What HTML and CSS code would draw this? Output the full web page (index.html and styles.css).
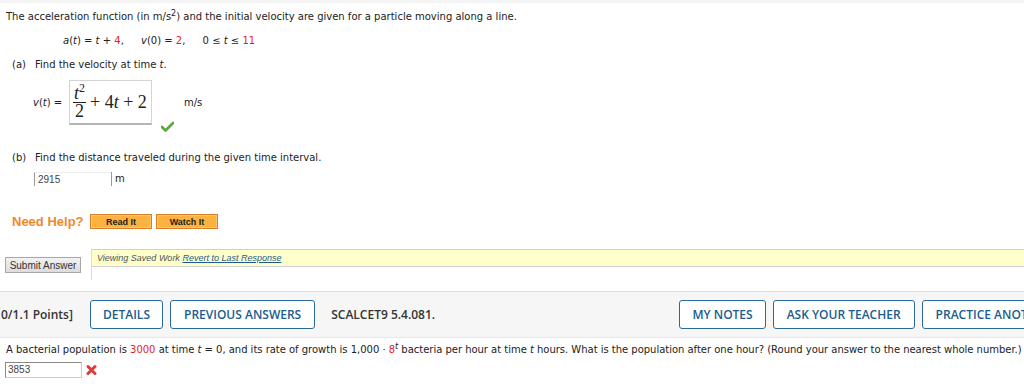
FILE: index.html
```html
<!DOCTYPE html>
<html>
<head>
    <title>Question</title>
    <meta charset="UTF-8">
    <link rel="stylesheet" href="styles.css">
</head>
<body>
    <div class="top-strip"></div>

    <div class="question">
        <p class="intro">The acceleration function (in m/s<sup>2</sup>) and the initial velocity are given for a particle moving along a line.</p>
        <p class="eq">
            <span class="term"><i>a</i>(<i>t</i>) = <i>t</i> + <span class="red">4</span>,</span>
            <span class="term"><i>v</i>(0) = <span class="red">2</span>,</span>
            <span class="term">0 &le; <i>t</i> &le; <span class="red">11</span></span>
        </p>

        <p class="part"><span class="label">(a)</span>Find the velocity at time <i>t</i>.</p>
        <div class="answer-row">
            <span class="lhs"><i>v</i>(<i>t</i>) =</span>
            <div class="mathbox">
                <span class="frac">
                    <span class="num"><i>t</i><sup>2</sup></span>
                    <span class="den">2</span>
                </span>
                <span class="rest">+ 4<i>t</i> + 2</span>
            </div>
            <svg class="check" width="13" height="11" viewBox="0 0 13 11">
                <path d="M1 6 L4.5 9.5 L12 2" fill="none" stroke="#5ea843" stroke-width="2.8" stroke-linecap="round" stroke-linejoin="round"/>
            </svg>
            <span class="unit">m/s</span>
        </div>

        <p class="part part-b"><span class="label">(b)</span>Find the distance traveled during the given time interval.</p>
        <div class="input-row">
            <span class="answer-field">2915</span>
            <span class="unit-m">m</span>
        </div>

        <div class="help-row">
            <span class="need-help">Need Help?</span>
            <button class="help-btn">Read It</button>
            <button class="help-btn">Watch It</button>
        </div>

        <div class="submit-row">
            <button class="submit-btn">Submit Answer</button>
            <div class="saved-box">
                <div class="saved-bar"><i>Viewing Saved Work</i> <a href="#">Revert to Last Response</a></div>
            </div>
        </div>
    </div>

    <div class="toolbar">
        <span class="points">0/1.1 Points]</span>
        <button class="tool-btn">DETAILS</button>
        <button class="tool-btn">PREVIOUS ANSWERS</button>
        <span class="ref">SCALCET9 5.4.081.</span>
        <div class="tool-right">
            <button class="tool-btn">MY NOTES</button>
            <button class="tool-btn">ASK YOUR TEACHER</button>
            <button class="tool-btn">PRACTICE ANOTHER</button>
        </div>
    </div>

    <div class="question next">
        <p class="bacteria">A bacterial population is <span class="red">3000</span> at time <i>t</i> = 0, and its rate of growth is 1,000 &middot; <span class="red">8</span><sup><i>t</i></sup> bacteria per hour at time <i>t</i> hours. What is the population after one hour? (Round your answer to the nearest whole number.)</p>
        <div class="input-row2">
            <span class="wrong-field">3853</span>
            <svg class="cross" width="11" height="12" viewBox="0 0 11 12">
                <path d="M2 2.5 L9 9.5 M9 2.5 L2 9.5" fill="none" stroke="#e03b3b" stroke-width="3" stroke-linecap="round"/>
            </svg>
        </div>
    </div>
</body>
</html>
```

FILE: styles.css
```css
/* page basics */
body {
    margin: 0;
    font-family: "DejaVu Sans", Verdana, sans-serif;
    font-size: 10px;
    color: #222;
    background: #ffffff;
    width: 1024px;
    overflow: hidden;
}
p {
    margin: 0;
    line-height: 14px;
}
.red {
    color: #e4231f;
}
sup {
    font-size: 8px;
    line-height: 0;
}
.top-strip {
    height: 3px;
    background-color: #f4f4f4;
}

/* question text */
.intro {
    margin-top: 7px;
    padding-left: 6px;
}
.eq {
    margin-top: 10px;
    padding-left: 63px;
}
.eq .term {
    margin-right: 14px;
}
.part {
    margin-top: 10px;
    padding-left: 12px;
}
.part .label {
    display: inline-block;
    width: 23px;
}
.part-b {
    margin-top: 26px;
}

/* velocity answer */
.answer-row {
    display: flex;
    align-items: center;
    height: 45px;
    margin-top: 8px;
    padding-left: 33px;
}
.lhs {
    width: 36px;
}
.mathbox {
    display: flex;
    align-items: center;
    box-sizing: border-box;
    width: 83px;
    height: 45px;
    padding-left: 3px;
    border: 1px solid #d4d4d4;
    border-bottom: 2px solid #b4b4b4;
    font-family: "Liberation Serif", "Times New Roman", serif;
    font-size: 18px;
    color: #222;
}
.frac {
    display: inline-flex;
    flex-direction: column;
    align-items: center;
    margin-right: 4px;
}
.frac .num {
    line-height: 17px;
    padding: 0 1px;
    border-bottom: 1px solid #222;
}
.frac .num sup {
    font-size: 12px;
}
.frac .den {
    line-height: 17px;
}
.check {
    align-self: flex-end;
    margin: 0 10px -7px 9px;
}

/* distance answer */
.input-row {
    display: flex;
    align-items: center;
    height: 14px;
    margin-top: 7px;
    padding-left: 34px;
}
.answer-field {
    box-sizing: border-box;
    width: 77px;
    height: 14px;
    padding-left: 3px;
    border-left: 1px solid #999;
    border-top: 1px solid #eee;
    font-family: "Liberation Sans", Arial, sans-serif;
    font-size: 10px;
    line-height: 13px;
    color: #444;
}
.unit-m {
    height: 14px;
    padding-left: 3px;
    border-left: 1px solid #999;
    line-height: 14px;
}

/* help buttons */
.help-row {
    display: flex;
    align-items: center;
    height: 15px;
    margin-top: 28px;
    padding-left: 12px;
}
.need-help {
    width: 78px;
    font-family: "Liberation Sans", Arial, sans-serif;
    font-weight: bold;
    font-size: 13px;
    color: #f0882a;
}
.help-btn {
    box-sizing: border-box;
    width: 62px;
    height: 15px;
    margin-right: 4px;
    padding: 0;
    background-color: #fcb241;
    border: 1px solid #d97f25;
    box-shadow: inset 0 0 0 1px #fdc56a;
    font-family: "Liberation Sans", Arial, sans-serif;
    font-weight: bold;
    font-size: 9px;
    color: #222;
}

/* submit + saved notice */
.submit-row {
    display: flex;
    align-items: flex-start;
    margin-top: 20px;
    padding-left: 5px;
}
.submit-btn {
    box-sizing: border-box;
    width: 76px;
    height: 16px;
    margin-top: 8px;
    margin-right: 10px;
    padding: 0;
    background: linear-gradient(#f2f2f2, #dcdcdc);
    border: 1px solid #a8a8a8;
    font-family: "Liberation Sans", Arial, sans-serif;
    font-size: 10px;
    color: #333;
}
.saved-box {
    flex: 1;
    height: 31px;
    border-left: 1px solid #dcdcdc;
}
.saved-bar {
    height: 16px;
    padding-left: 5px;
    background-color: #ffffcc;
    border-top: 1px solid #cfcfcf;
    border-bottom: 1px solid #cfcfcf;
    font-family: "Liberation Sans", Arial, sans-serif;
    font-size: 9px;
    line-height: 16px;
    color: #555;
}
.saved-bar a {
    color: #1d5c8c;
    font-style: italic;
}

/* question toolbar */
.toolbar {
    display: flex;
    align-items: center;
    box-sizing: border-box;
    height: 47px;
    margin-top: 11px;
    padding-left: 1px;
    background-color: #f6f6f6;
    border-top: 1px solid #dedede;
    border-bottom: 1px solid #e6e6e6;
    font-family: "Open Sans", sans-serif;
    font-size: 12px;
    white-space: nowrap;
}
.points {
    width: 89px;
    font-weight: 600;
    color: #333;
}
.tool-btn {
    box-sizing: border-box;
    height: 29px;
    margin-right: 7px;
    padding: 0 13px;
    background-color: #ffffff;
    border: 1px solid #2a6a9a;
    border-radius: 3px;
    font-family: "Open Sans", sans-serif;
    font-size: 12px;
    font-weight: 600;
    color: #1a5d8e;
}
.tool-btn:first-of-type {
    padding: 0 12px;
}
.ref {
    margin-left: 9px;
    font-weight: 600;
    color: #333;
}
.tool-right {
    display: flex;
    margin-left: auto;
    margin-right: -48px;
}

/* next question */
.next .bacteria {
    margin-top: 5px;
    padding-left: 6px;
    white-space: nowrap;
    letter-spacing: -0.02px;
}
.input-row2 {
    display: flex;
    align-items: center;
    margin-top: 5px;
    padding-left: 5px;
}
.wrong-field {
    box-sizing: border-box;
    width: 77px;
    height: 16px;
    padding-left: 2px;
    border: 1px solid #8a8a8a;
    border-right-color: #ccc;
    border-bottom-color: #ccc;
    font-family: "Liberation Sans", Arial, sans-serif;
    font-size: 10px;
    line-height: 13px;
    color: #444;
}
.cross {
    margin-left: 4px;
}
```
